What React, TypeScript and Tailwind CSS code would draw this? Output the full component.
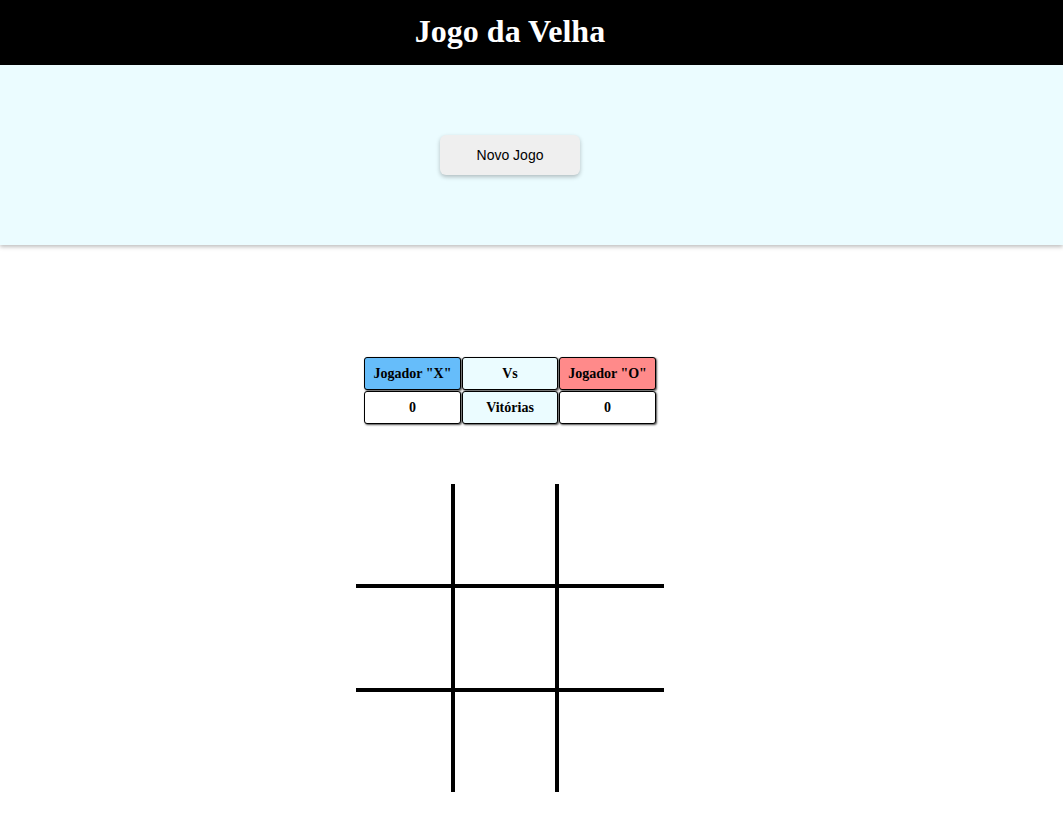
import React, { useState } from 'react';

const serif = { fontFamily: '"Liberation Serif", "Times New Roman", serif' };

export default function App() {
  const [board, setBoard] = useState<string[]>(Array(9).fill(''));
  const [turn, setTurn] = useState('X');

  const jogar = (i: number) => {
    if (board[i]) return;
    const novo = [...board];
    novo[i] = turn;
    setBoard(novo);
    setTurn(turn === 'X' ? 'O' : 'X');
  };

  return (
    <div className="min-h-screen bg-white">
      {/* Cabeçalho */}
      <header className="bg-black h-[65px] w-full">
        <div className="w-[1020px] h-full flex items-center justify-center pb-[4px]">
          <h1 className="text-white text-[32px] leading-[48px] font-bold" style={serif}>
            Jogo da Velha
          </h1>
        </div>
      </header>

      {/* Painel do botão */}
      <section className="bg-[#ebfcff] h-[180px] w-full shadow-[0_2px_4px_rgba(0,0,0,0.25)] relative">
        <div className="w-[1020px] h-full flex items-center justify-center">
          <button
            className="w-[140px] h-[40px] bg-[#efefef] rounded-md shadow-[0_2px_4px_rgba(0,0,0,0.25)] text-[14px] text-black"
            style={{ fontFamily: '"Liberation Sans", Arial, sans-serif' }}
            onClick={() => {
              setBoard(Array(9).fill(''));
              setTurn('X');
            }}
          >
            Novo Jogo
          </button>
        </div>
      </section>

      {/* Placar */}
      <div className="w-[1020px] flex flex-col items-center pt-[112px]">
        <div className="grid grid-cols-[97px_96px_97px] gap-px text-[14px] font-bold text-black" style={serif}>
          <div className="h-[33px] flex items-center justify-center bg-[#66bdfa] border border-black rounded-[3px] shadow-[1px_1px_2px_rgba(0,0,0,0.7)]">
            Jogador "X"
          </div>
          <div className="h-[33px] flex items-center justify-center bg-[#ebfcff] border border-black rounded-[3px] shadow-[1px_1px_2px_rgba(0,0,0,0.7)]">
            Vs
          </div>
          <div className="h-[33px] flex items-center justify-center bg-[#ff8a8a] border border-black rounded-[3px] shadow-[1px_1px_2px_rgba(0,0,0,0.7)]">
            Jogador "O"
          </div>
          <div className="h-[33px] flex items-center justify-center bg-white border border-black rounded-[3px] shadow-[1px_1px_2px_rgba(0,0,0,0.7)]">
            0
          </div>
          <div className="h-[33px] flex items-center justify-center bg-[#ebfcff] border border-black rounded-[3px] shadow-[1px_1px_2px_rgba(0,0,0,0.7)]">
            Vitórias
          </div>
          <div className="h-[33px] flex items-center justify-center bg-white border border-black rounded-[3px] shadow-[1px_1px_2px_rgba(0,0,0,0.7)]">
            0
          </div>
        </div>

        {/* Tabuleiro */}
        <div className="mt-[60px] grid grid-cols-[95px_100px_105px] grid-rows-[100px_100px_100px] gap-1 bg-black">
          {board.map((v, i) => (
            <div
              key={i}
              className="bg-white flex items-center justify-center text-[56px] font-bold cursor-pointer"
              style={serif}
              onClick={() => jogar(i)}
            >
              {v}
            </div>
          ))}
        </div>
      </div>
    </div>
  );
}
